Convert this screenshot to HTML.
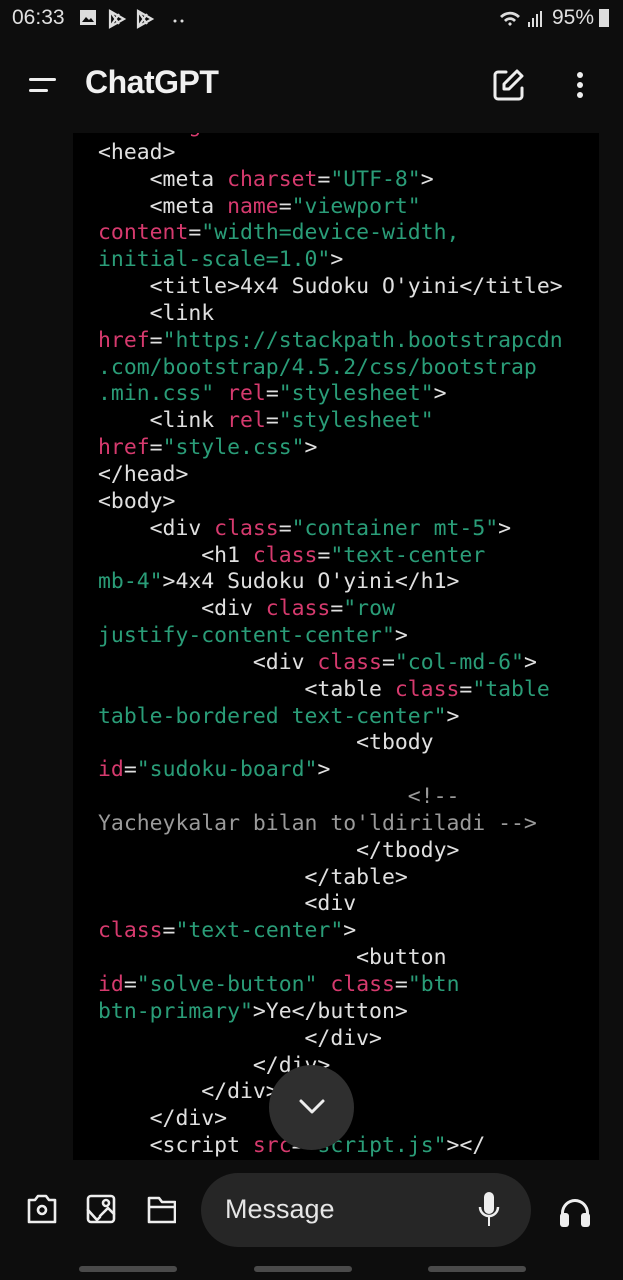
<!DOCTYPE html>
<html><head><meta charset="utf-8"><style>
html,body{margin:0;padding:0;background:#0d0d0d;width:623px;height:1280px;overflow:hidden;position:relative;font-family:"Liberation Sans",sans-serif;color:#ececec}
.sb{position:absolute;top:6px;font-size:21px;color:#e0e0e0}
.code{position:absolute;left:73px;top:133px;width:526px;height:1027px;background:#000;overflow:hidden}
pre{position:absolute;left:25px;top:-20px;margin:0;font-family:"DejaVu Sans Mono",monospace;font-size:21.45px;line-height:26.85px;color:#e0e0e0}
.a{color:#d63a6e}.s{color:#2a9d78}.c{color:#9a9a9a}
.title{position:absolute;left:85px;top:64px;font-size:32px;font-weight:bold;color:#f0f0f0;letter-spacing:-0.5px}
.fab{position:absolute;left:269px;top:1065px;width:85px;height:85px;border-radius:50%;background:#2f2f2f}
.msg{position:absolute;left:201px;top:1173px;width:330px;height:74px;border-radius:37px;background:#262626}
.msg span{position:absolute;left:24px;top:21px;font-size:27px;color:#e6e6e6}
.bar{position:absolute;top:1266px;height:6px;border-radius:3px;background:#4a4a4a;width:98px}
</style></head><body>
<div class="sb" style="left:12px">06:33</div>
<svg style="position:absolute;left:78px;top:8px" width="110" height="22" fill="none" stroke="#ddd" stroke-width="2.2">
<rect x="2" y="2" width="16" height="15" fill="#ddd" stroke="none"/><path d="M4 14l4-5 3 3 2-2 3 4z" fill="#0d0d0d" stroke="none"/>
<path d="M32 3l14 8-14 8z M32 3l9 13 M32 19l9-13"/>
<path d="M60 3l14 8-14 8z M60 3l9 13 M60 19l9-13"/>
<circle cx="97" cy="13" r="1.5" fill="#ddd" stroke="none"/><circle cx="104" cy="13" r="1.5" fill="#ddd" stroke="none"/>
</svg>
<svg style="position:absolute;left:498px;top:8px" width="50" height="22" fill="#ddd">
<path d="M2 8a14 14 0 0 1 20 0l-2 2a11 11 0 0 0-16 0zM6 12a8 8 0 0 1 12 0l-2 2a5 5 0 0 0-8 0zM10 16l2-2 2 2-2 2z"/>
<rect x="30" y="14" width="2" height="5"/><rect x="34" y="10" width="2" height="9"/><rect x="38" y="6" width="2" height="13"/><rect x="42" y="3" width="2" height="16"/>
</svg>
<div class="sb" style="left:552px">95%</div>
<div style="position:absolute;left:599px;top:9px;width:10px;height:18px;background:#ddd"></div>
<div style="position:absolute;left:29px;top:78px;width:27px;height:3px;background:#eee;border-radius:2px"></div>
<div style="position:absolute;left:29px;top:89px;width:19px;height:3px;background:#eee;border-radius:2px"></div>
<div class="title">ChatGPT</div>
<svg style="position:absolute;left:492px;top:68px" width="34" height="34" fill="none" stroke="#eee" stroke-width="3" stroke-linecap="round" stroke-linejoin="round">
<path d="M14 4H6a3 3 0 0 0-3 3v21a3 3 0 0 0 3 3h21a3 3 0 0 0 3-3v-8"/><path d="M25 3l5 5-13 13h-5v-5z"/></svg>
<svg style="position:absolute;left:572px;top:71px" width="16" height="30" fill="#eee"><circle cx="8" cy="4" r="3"/><circle cx="8" cy="14" r="3"/><circle cx="8" cy="24" r="3"/></svg>
<div class="code"><pre><span class="a">       g</span>
&lt;head&gt;
    &lt;meta <span class="a">charset</span>=<span class="s">"UTF-8"</span>&gt;
    &lt;meta <span class="a">name</span>=<span class="s">"viewport"</span>
<span class="a">content</span>=<span class="s">"width=device-width,</span>
<span class="s">initial-scale=1.0"</span>&gt;
    &lt;title&gt;4x4 Sudoku O'yini&lt;/title&gt;
    &lt;link
<span class="a">href</span>=<span class="s">"https://stackpath.bootstrapcdn</span>
<span class="s">.com/bootstrap/4.5.2/css/bootstrap</span>
<span class="s">.min.css"</span> <span class="a">rel</span>=<span class="s">"stylesheet"</span>&gt;
    &lt;link <span class="a">rel</span>=<span class="s">"stylesheet"</span>
<span class="a">href</span>=<span class="s">"style.css"</span>&gt;
&lt;/head&gt;
&lt;body&gt;
    &lt;div <span class="a">class</span>=<span class="s">"container mt-5"</span>&gt;
        &lt;h1 <span class="a">class</span>=<span class="s">"text-center</span>
<span class="s">mb-4"</span>&gt;4x4 Sudoku O'yini&lt;/h1&gt;
        &lt;div <span class="a">class</span>=<span class="s">"row</span>
<span class="s">justify-content-center"</span>&gt;
            &lt;div <span class="a">class</span>=<span class="s">"col-md-6"</span>&gt;
                &lt;table <span class="a">class</span>=<span class="s">"table</span>
<span class="s">table-bordered text-center"</span>&gt;
                    &lt;tbody
<span class="a">id</span>=<span class="s">"sudoku-board"</span>&gt;
                        <span class="c">&lt;!--</span>
<span class="c">Yacheykalar bilan to'ldiriladi --&gt;</span>
                    &lt;/tbody&gt;
                &lt;/table&gt;
                &lt;div
<span class="a">class</span>=<span class="s">"text-center"</span>&gt;
                    &lt;button
<span class="a">id</span>=<span class="s">"solve-button"</span> <span class="a">class</span>=<span class="s">"btn</span>
<span class="s">btn-primary"</span>&gt;Ye&lt;/button&gt;
                &lt;/div&gt;
            &lt;/div&gt;
        &lt;/div&gt;
    &lt;/div&gt;
    &lt;script <span class="a">src</span>=<span class="s">"script.js"</span>&gt;&lt;/
</pre></div>
<div class="fab"><svg style="position:absolute;left:29px;top:32px" width="28" height="20" fill="none" stroke="#eee" stroke-width="3" stroke-linecap="round" stroke-linejoin="round"><path d="M3 4l11 11 11-11"/></svg></div>
<svg style="position:absolute;left:26px;top:1192px" width="150" height="36" fill="none" stroke="#eee" stroke-width="2.6" stroke-linejoin="round" stroke-linecap="round">
<path d="M3 8h6l3-4h8l3 4h6v22H3z"/><circle cx="16" cy="18" r="4"/>
<rect x="62" y="4" width="26" height="26" rx="3"/><path d="M62 18l9 10M71 28l3-3 M88 22l-6-6-8 8"/><circle cx="80" cy="11" r="3"/>
<path d="M123 6h10l3 4h13v20h-26zM123 15h26"/>
</svg>
<div class="msg"><span>Message</span>
<svg style="position:absolute;left:277px;top:19px" width="22" height="36" fill="#eee"><rect x="6" y="0" width="10" height="22" rx="5"/><rect x="10" y="24" width="2" height="10"/><path d="M2 15a9 9 0 0 0 18 0" fill="none" stroke="#eee" stroke-width="2.5"/></svg>
</div>
<svg style="position:absolute;left:557px;top:1193px" width="36" height="36" fill="#eee"><path d="M4 20a14 14 0 0 1 28 0v8h-3v-8a11 11 0 0 0-22 0v8H4z"/><rect x="3" y="20" width="9" height="14" rx="3"/><rect x="24" y="20" width="9" height="14" rx="3"/></svg>
<div class="bar" style="left:79px"></div><div class="bar" style="left:254px"></div><div class="bar" style="left:428px"></div>
</body></html>
